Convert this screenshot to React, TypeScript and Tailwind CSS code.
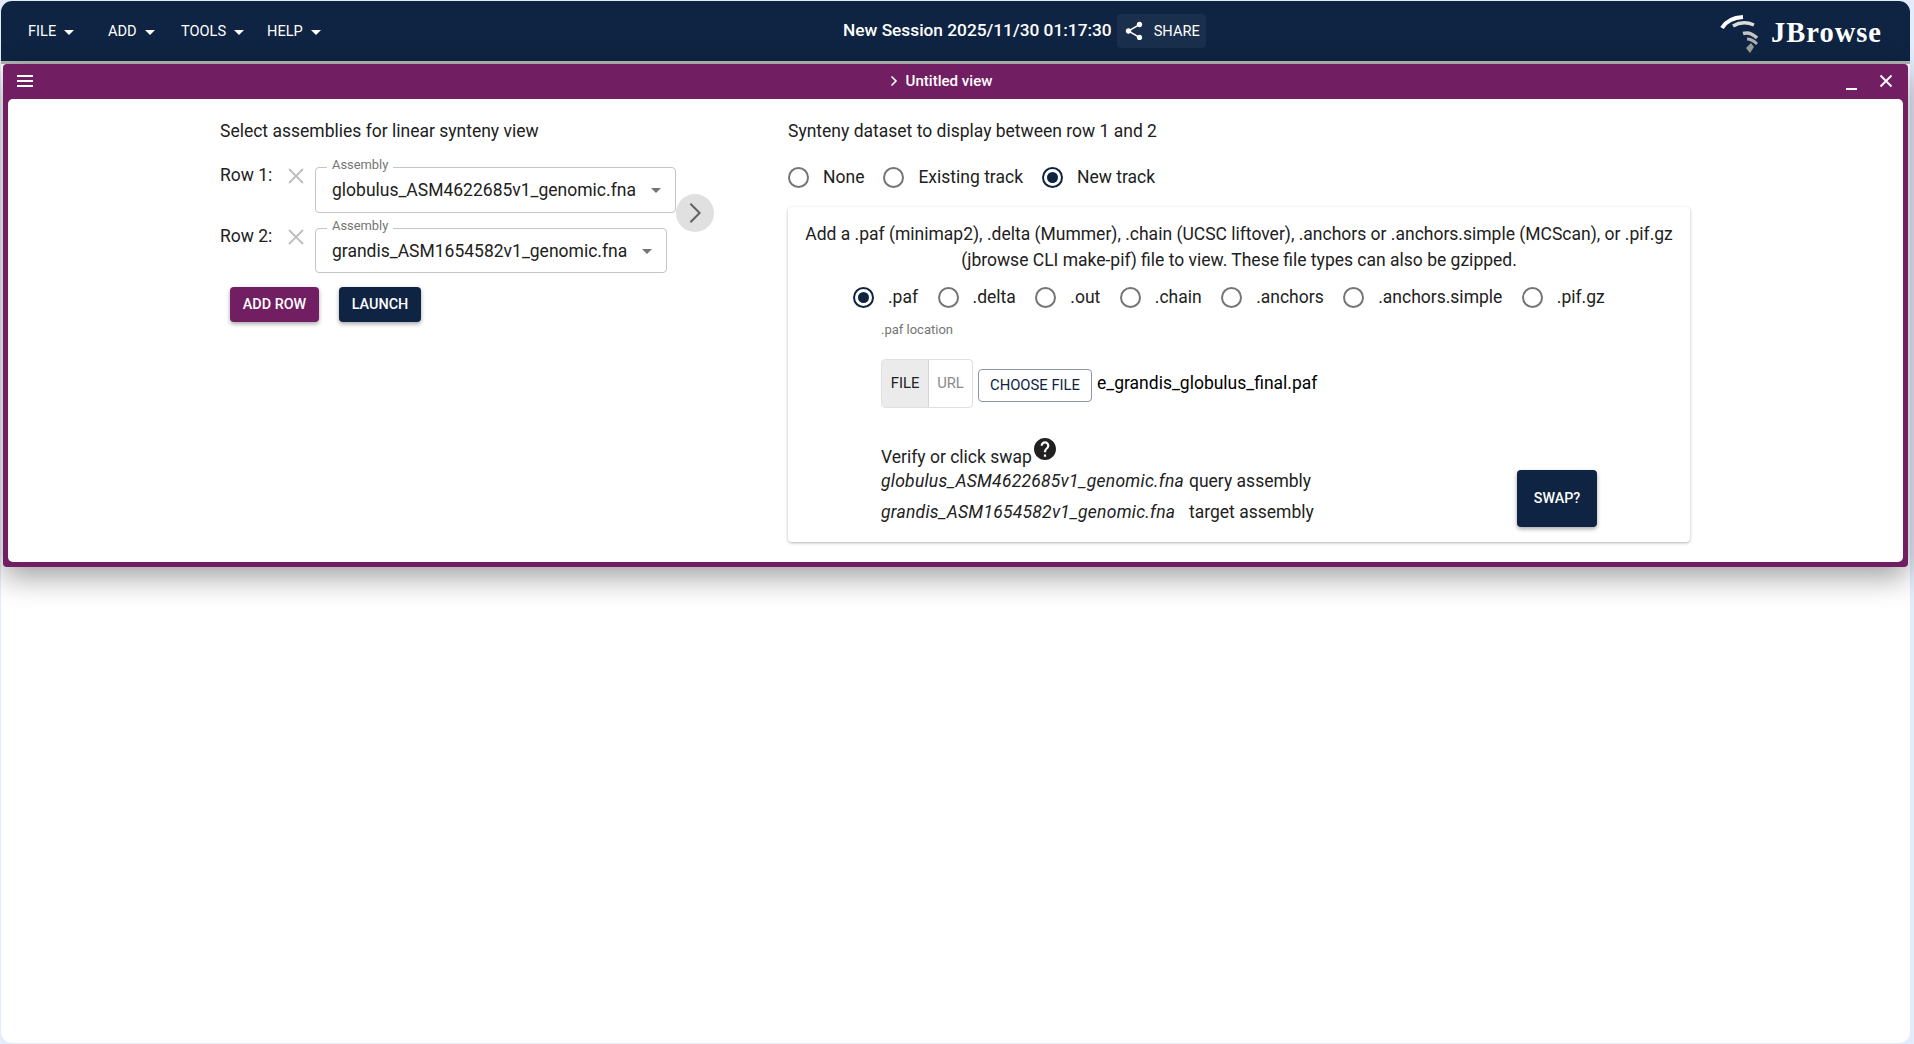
const font = "font-['Roboto',sans-serif]";
const bodyText = "text-[17.500px] leading-6 text-[#212121]";

const menuItems = [
  { label: "FILE", className: "w-[80px]" },
  { label: "ADD", className: "w-[73px]" },
  { label: "TOOLS", className: "w-[86px]" },
  { label: "HELP", className: "" },
];

const trackOptions = [
  { label: "None", checked: false },
  { label: "Existing track", checked: false },
  { label: "New track", checked: true },
];

const formatOptions = [".paf", ".delta", ".out", ".chain", ".anchors", ".anchors.simple", ".pif.gz"];

function Caret({ className }: { className: string }) {
  return (
    <svg viewBox="0 0 24 24" className={"h-6 w-6 shrink-0 " + className} fill="currentColor" aria-hidden>
      <path d="M7 10l5 5 5-5z" />
    </svg>
  );
}

function Radio({ label, checked }: { label: string; checked: boolean }) {
  return (
    <div className="flex items-center gap-[14px]">
      <span className={"flex h-[21px] w-[21px] items-center justify-center rounded-full border-2 " + (checked ? "border-[#0d233f]" : "border-[#757575]")}>
        {checked && <span className="h-[11px] w-[11px] rounded-full bg-[#0d233f]" />}
      </span>
      <span className={bodyText}>{label}</span>
    </div>
  );
}

function RemoveIcon() {
  return (
    <svg viewBox="0 0 16 16" className="h-4 w-4 shrink-0" stroke="#bdbdbd" strokeWidth="1.8" fill="none" aria-hidden>
      <path d="M1 1l14 14M15 1L1 15" />
    </svg>
  );
}

function AssemblySelect({ value, height }: { value: string; height: string }) {
  return (
    <div className={"relative flex items-center rounded border border-[#c4c4c4] pl-4 pr-[7px] " + height}>
      <span className="absolute left-[11px] top-[-10px] bg-white px-[5px] text-[12.900px] leading-[14px] text-[#757575]">Assembly</span>
      <span className={bodyText}>{value}</span>
      <Caret className="ml-[8px] text-[#757575]" />
    </div>
  );
}

function AssemblyRow({ name, value, height, mt }: { name: string; value: string; height: string; mt: string }) {
  return (
    <div className={"flex items-start " + mt}>
      <span className={"mt-[-4px] w-[68px] " + bodyText}>{name}</span>
      <span className="flex w-[27px] pt-[1px]"><RemoveIcon /></span>
      <AssemblySelect value={value} height={height} />
    </div>
  );
}

function JBrowseLogo() {
  return (
    <svg viewBox="0 0 40 40" className="h-10 w-10 shrink-0" fill="none" aria-hidden>
      <path d="M3 14C7 7 15 3.500 24 3" stroke="#ffffff" strokeWidth="4" />
      <path d="M14 12C20 8.500 28 8 35 11" stroke="#dcdcdc" strokeWidth="3.500" />
      <path d="M24 19.500C29 18 34 20 38 24" stroke="#c4c4c4" strokeWidth="3.500" />
      <path d="M28 25C31 25 35 27 38 30" stroke="#b0b0b0" strokeWidth="3" />
      <path d="M27 34L32 29L35 33L31 39z" fill="#999999" />
    </svg>
  );
}

function AppBar() {
  return (
    <div className="flex h-[60px] items-center bg-[#0e2442] rounded-t-[11px]">
      <div className="flex w-[842px] shrink-0 items-center pl-[27px] pt-[2px] text-[14.600px] text-white">
        {menuItems.map((item) => (
          <div key={item.label} className={"flex items-center " + item.className}>
            <span>{item.label}</span>
            <Caret className="ml-[1px] text-white" />
          </div>
        ))}
      </div>
      <div className="flex items-center">
        <span className="text-[17.300px] font-medium text-white">New Session 2025/11/30 01:17:30</span>
        <div className="ml-[5px] flex h-[34px] w-[89px] items-center rounded bg-white/5 pl-[6px]">
          <svg viewBox="0 0 24 24" className="h-[22px] w-[22px]" fill="#ffffff" aria-hidden>
            <path d="M18 16.080c-.76 0-1.440.3-1.960.77L8.910 12.700c.05-.23.09-.46.09-.7s-.04-.47-.09-.7l7.050-4.110c.54.5 1.250.81 2.040.81 1.660 0 3-1.340 3-3s-1.340-3-3-3-3 1.340-3 3c0 .24.04.47.09.7L8.040 9.810C7.500 9.310 6.790 9 6 9c-1.660 0-3 1.340-3 3s1.340 3 3 3c.79 0 1.500-.31 2.040-.81l7.120 4.160c-.05.21-.08.43-.08.650 0 1.610 1.310 2.920 2.920 2.920s2.920-1.310 2.920-2.920-1.310-2.920-2.920-2.920z" />
          </svg>
          <span className="ml-[9px] pt-[2px] text-[14.600px] text-white">SHARE</span>
        </div>
      </div>
      <div className="flex flex-1 items-center justify-end pr-[28px] pt-[5px]">
        <JBrowseLogo />
        <span className="ml-[12px] font-['Liberation_Serif',serif] text-[28.500px] font-bold leading-none tracking-[1px] text-white">JBrowse</span>
      </div>
    </div>
  );
}

function ViewHeader() {
  return (
    <div className="flex h-[35px] items-center justify-between">
      <div className="mb-[2px] flex w-[100px] pl-[8px]">
        <svg viewBox="0 0 18 14" className="h-[14px] w-[18px]" fill="#ffffff" aria-hidden>
          <path d="M1 1h16v2H1zM1 6h16v2H1zM1 11h16v2H1z" />
        </svg>
      </div>
      <div className="flex items-center">
        <svg viewBox="0 0 10 12" className="h-3 w-[10px]" stroke="#ffffff" strokeWidth="1.600" fill="none" aria-hidden>
          <path d="M2.500 1.500L7 6l-4.500 4.500" />
        </svg>
        <span className="ml-[7px] text-[15.100px] font-medium text-white">Untitled view</span>
      </div>
      <div className="mb-[2px] flex w-[130px] items-center justify-end pr-[10px]">
        <span className="mt-[16px] h-[2px] w-[11px] bg-white" />
        <svg viewBox="0 0 14 14" className="ml-[22px] h-[14px] w-[14px]" stroke="#ffffff" strokeWidth="1.800" fill="none" aria-hidden>
          <path d="M1.500 1.500l11 11M12.500 1.500l-11 11" />
        </svg>
      </div>
    </div>
  );
}

function AssemblyColumn() {
  return (
    <div className="w-[780px] shrink-0 pl-[212px] pt-[20px]">
      <p className={bodyText}>Select assemblies for linear synteny view</p>
      <div className="relative mt-[24px] inline-block">
        <AssemblyRow name="Row 1:" value="globulus_ASM4622685v1_genomic.fna" height="h-[46px]" mt="" />
        <AssemblyRow name="Row 2:" value="grandis_ASM1654582v1_genomic.fna" height="h-[45px]" mt="mt-[15px]" />
        <span className="absolute left-[456px] top-[27px] flex h-[38px] w-[38px] items-center justify-center rounded-full bg-[#e0e0e0]">
          <svg viewBox="0 0 14 24" className="h-[22px] w-[14px]" stroke="#616161" strokeWidth="2.200" fill="none" aria-hidden>
            <path d="M2 2l10 10L2 22" />
          </svg>
        </span>
      </div>
      <div className="ml-[10px] mt-[14px] flex gap-[20px]">
        <span className="flex h-[35px] w-[89px] items-center justify-center rounded bg-[#721e63] text-[14.400px] font-medium text-white shadow-[0_2px_4px_rgba(0,0,0,0.35)]">ADD ROW</span>
        <span className="flex h-[35px] w-[82px] items-center justify-center rounded bg-[#0e2442] text-[14.400px] font-medium text-white shadow-[0_2px_4px_rgba(0,0,0,0.35)]">LAUNCH</span>
      </div>
    </div>
  );
}

function DatasetColumn() {
  return (
    <div className="w-[902px] shrink-0 pt-[20px]">
      <p className={bodyText}>Synteny dataset to display between row 1 and 2</p>
      <div className="mt-[22px] flex gap-[19px]">
        {trackOptions.map((option) => (
          <Radio key={option.label} label={option.label} checked={option.checked} />
        ))}
      </div>
      <div className="mt-[18px] h-[335px] rounded shadow-[0_1px_3px_rgba(0,0,0,0.3)]">
        <p className="pt-[14px] text-center text-[17.500px] leading-[26px] text-[#212121]">
          Add a .paf (minimap2), .delta (Mummer), .chain (UCSC liftover), .anchors or .anchors.simple (MCScan), or .pif.gz
          <br />
          (jbrowse CLI make-pif) file to view. These file types can also be gzipped.
        </p>
        <div className="ml-[65px] mt-[12px] flex gap-[19.500px]">
          {formatOptions.map((format, i) => (
            <Radio key={format} label={format} checked={i === 0} />
          ))}
        </div>
        <div className="pl-[93px]">
          <p className="mt-[13px] text-[13px] leading-4 text-[#757575]">.paf location</p>
          <div className="mt-[21px] flex items-start">
            <div className="flex h-[49px] w-[92px] rounded border border-[#e0e0e0] text-[14.800px]">
              <span className="flex w-[47px] items-center justify-center border-r border-[#d5d5d5] bg-[#ebebeb] text-[#212121]">FILE</span>
              <span className="flex flex-1 items-center justify-center text-[#8a8a8a]">URL</span>
            </div>
            <span className="ml-[5px] mt-[10px] flex h-[33px] w-[114px] items-center justify-center rounded border border-[#8a95a5] text-[14.800px] text-[#0e2442]">CHOOSE FILE</span>
            <span className="ml-[5px] mt-[12px] text-[17.500px] leading-6 text-black">e_grandis_globulus_final.paf</span>
          </div>
          <div className="mt-[30px] flex items-start">
            <span className={"mt-[7px] " + bodyText}>Verify or click swap</span>
            <svg viewBox="2 2 20 20" className="ml-[2px] h-[22px] w-[22px]" fill="#212121" aria-hidden>
              <path d="M12 2C6.480 2 2 6.480 2 12s4.480 10 10 10 10-4.480 10-10S17.520 2 12 2zm1 17h-2v-2h2v2zm2.070-7.750l-.9.920C13.450 12.900 13 13.500 13 15h-2v-.5c0-1.100.45-2.100 1.170-2.830l1.240-1.260c.37-.36.59-.86.59-1.410 0-1.100-.9-2-2-2s-2 .9-2 2H8c0-2.210 1.790-4 4-4s4 1.790 4 4c0 .88-.36 1.680-.93 2.250z" />
            </svg>
          </div>
          <div className="flex items-start justify-between pr-[93px]">
            <div className="text-[17.500px] text-[#212121]">
              <div className="flex h-[24px] items-center">
                <em className="w-[308px] tracking-[0.25px]">globulus_ASM4622685v1_genomic.fna</em>
                <span>query assembly</span>
              </div>
              <div className="mt-[7px] flex h-[24px] items-center">
                <em className="w-[308px] tracking-[0.25px]">grandis_ASM1654582v1_genomic.fna</em>
                <span>target assembly</span>
              </div>
            </div>
            <span className="mt-[1px] flex h-[57px] w-[80px] items-center justify-center rounded bg-[#0e2442] text-[14.300px] font-medium text-white shadow-[0_2px_4px_rgba(0,0,0,0.35)]">SWAP?</span>
          </div>
        </div>
      </div>
    </div>
  );
}

export default function App() {
  return (
    <div className={"h-[1044px] w-[1914px] overflow-hidden bg-[#e3ecfc] pl-[1px] pt-[1px] " + font}>
      <div className="h-[1042px] w-[1909px] rounded-[11px] bg-white">
        <AppBar />
        <div className="h-[3px] bg-[#b5b5b5]" />
        <div className="mx-[2px] rounded-[4px] bg-[#721e63] px-[5px] pb-[5px] shadow-[0_10px_30px_rgba(0,0,0,0.38)]">
          <ViewHeader />
          <div className="flex h-[463px] rounded-[5px] bg-white">
            <AssemblyColumn />
            <DatasetColumn />
          </div>
        </div>
      </div>
    </div>
  );
}
